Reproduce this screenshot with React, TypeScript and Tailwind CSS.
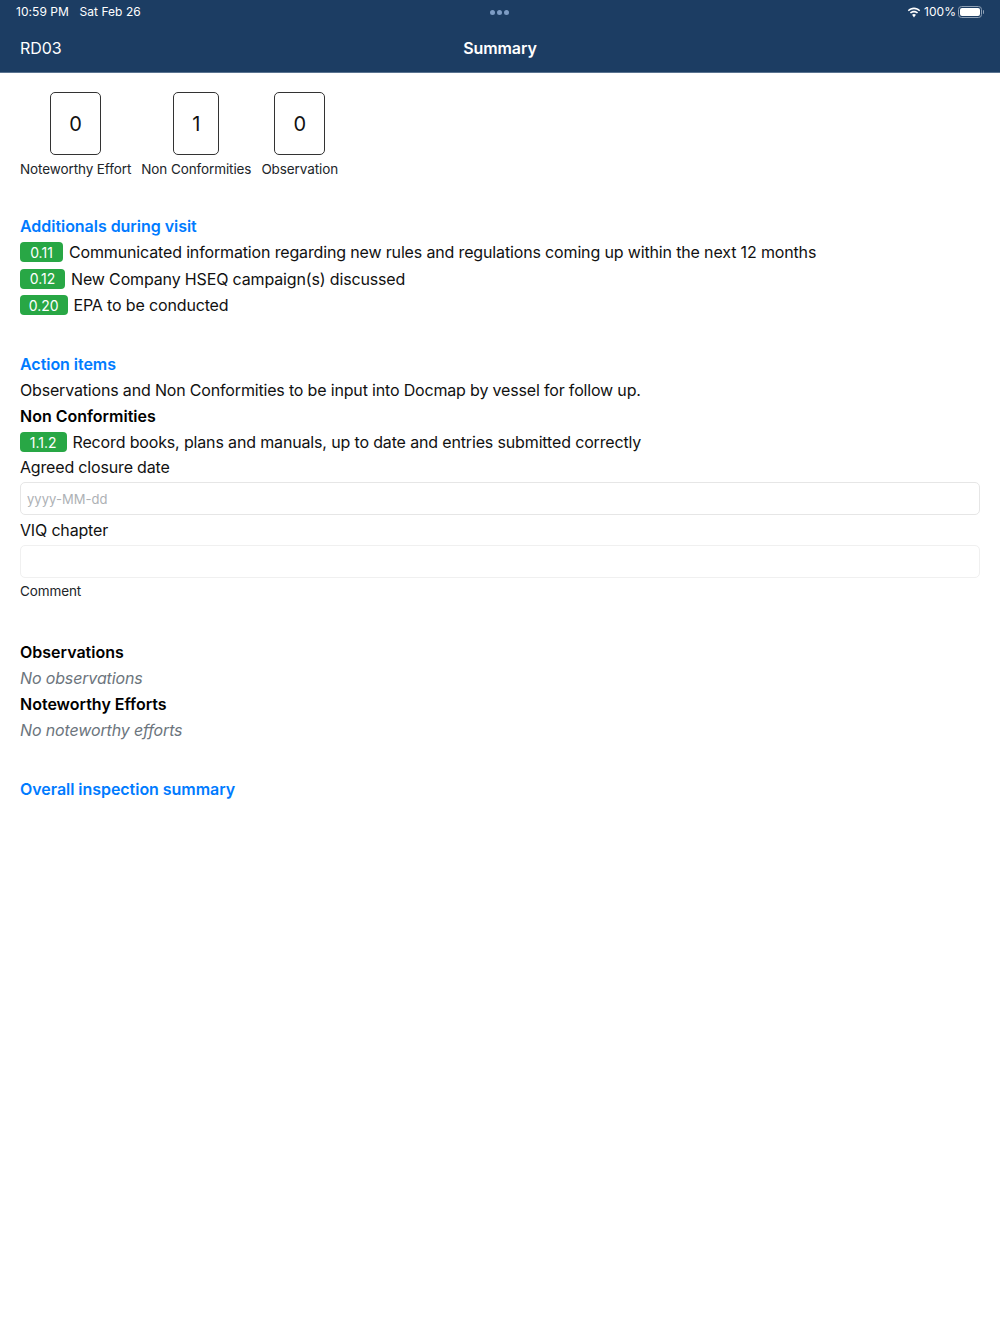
const font = "font-['Inter','Liberation_Sans',sans-serif]";

function Counter({ value, label }: { value: number; label: string }) {
  return (
    <div className="flex flex-col items-center">
      <div className="px-[18px] h-[63px] border border-[#333] rounded-[5px] flex items-center justify-center text-[20px] text-[#111]">
        {value}
      </div>
      <div className="mt-[4px] text-[13.5px] leading-[21px] text-[#212529] tracking-[-0.1px]">{label}</div>
    </div>
  );
}

function Tagged({ code, text, width }: { code: string; text: string; width: string }) {
  return (
    <div className="flex items-center h-[26.5px] text-[16px] text-[#111] tracking-[-0.15px]">
      <span className={`${width} bg-[#28a745] text-white text-[14px] rounded-[4px] h-[20px] flex items-center justify-center mr-[6px] tracking-normal font-normal`}>
        {code}
      </span>
      {text}
    </div>
  );
}

function Heading({ children }: { children: React.ReactNode }) {
  return <div className="text-[16px] leading-[26px] font-semibold text-[#007bff] tracking-[-0.04px]">{children}</div>;
}

function Sub({ children }: { children: React.ReactNode }) {
  return <div className="text-[16px] leading-[26px] font-semibold text-black">{children}</div>;
}

function Line({ children }: { children: React.ReactNode }) {
  return <div className="text-[16px] leading-[26px] text-[#111] tracking-[-0.17px]">{children}</div>;
}

function Muted({ children }: { children: React.ReactNode }) {
  return <div className="text-[16px] leading-[26px] italic text-[#6c757d] tracking-[-0.14px]">{children}</div>;
}

export default function App() {
  return (
    <div className={`${font} w-[1000px] h-[1334px] bg-white overflow-hidden`}>
      <header className="bg-[#1c3d63] h-[73px] border-b border-[#5a7390] text-white">
        <div className="relative flex items-center justify-between h-[24.5px] px-[16px] text-[12px] tracking-[0.05px]">
          <div className="flex gap-[10.5px]">
            <span>10:59 PM</span>
            <span>Sat Feb 26</span>
          </div>
          <div className="absolute left-[490px] top-[10px] flex gap-[2px]">
            <span className="w-[5px] h-[5px] rounded-full bg-[#7d9cc4]" />
            <span className="w-[5px] h-[5px] rounded-full bg-[#7d9cc4]" />
            <span className="w-[5px] h-[5px] rounded-full bg-[#7d9cc4]" />
          </div>
          <div className="flex items-center">
            <svg width="14" height="11" viewBox="0 0 14 11" fill="white" className="mr-[3px]">
              <path d="M7 2.2c2 0 3.8.8 5.2 2.1l1-1.1C11.5 1.6 9.4.6 7 .6S2.500 1.600.8 3.200l1 1.100C3.200 3 5 2.200 7 2.200z" />
              <path d="M7 5.400c1.100 0 2.200.4 3 1.200l1.100-1.100C10 4.400 8.600 3.800 7 3.800s-3 .6-4.100 1.700L4 6.600c.8-.8 1.900-1.200 3-1.200z" />
              <path d="M7 7c-.8 0-1.400.3-1.900.8L7 10.400l1.900-2.600C8.400 7.300 7.800 7 7 7z" />
            </svg>
            <span>100%</span>
            <div className="flex items-center gap-[1px] ml-[2px]">
              <div className="w-[24px] h-[12px] rounded-[3.500px] border border-[#8ea0b5] p-[1px]">
                <div className="w-full h-full bg-white rounded-[2px]" />
              </div>
              <div className="w-[1px] h-[4px] bg-[#8ea0b5] rounded-r-[1px]" />
            </div>
          </div>
        </div>
        <div className="relative flex items-center justify-center h-[47px]">
          <span className="absolute left-[20px] text-[16px] tracking-[-0.1px]">RD03</span>
          <span className="text-[16px] font-semibold tracking-[-0.1px]">Summary</span>
        </div>
      </header>

      <main className="px-[20px] pt-[19px]">
        <div className="flex gap-[10px]">
          <Counter value={0} label="Noteworthy Effort" />
          <Counter value={1} label="Non Conformities" />
          <Counter value={0} label="Observation" />
        </div>

        <section className="mt-[33px]">
          <Heading>Additionals during visit</Heading>
          <Tagged width="w-[43px]" code="0.11" text="Communicated information regarding new rules and regulations coming up within the next 12 months" />
          <Tagged width="w-[45px]" code="0.12" text="New Company HSEQ campaign(s) discussed" />
          <Tagged width="w-[47.5px]" code="0.20" text="EPA to be conducted" />
        </section>

        <section className="mt-[32.5px]">
          <Heading>Action items</Heading>
          <Line>Observations and Non Conformities to be input into Docmap by vessel for follow up.</Line>
          <Sub>Non Conformities</Sub>
          <Tagged width="w-[46.5px]" code="1.1.2" text="Record books, plans and manuals, up to date and entries submitted correctly" />
          <div className="-mt-[1.5px]">
            <Line>Agreed closure date</Line>
          </div>
          <input
            readOnly
            placeholder="yyyy-MM-dd"
            className="block w-full h-[33px] mt-[2px] px-[6px] rounded-[5px] border border-[#e6e6e6] text-[13px] tracking-[0.05px] placeholder:text-[#adb1b5] outline-none"
          />
          <div className="mt-[2px]">
            <Line>VIQ chapter</Line>
          </div>
          <div className="h-[33px] mt-[2px] rounded-[5px] border border-[#f0f0f0]" />
          <div className="mt-[3px] text-[13.5px] leading-[21px] text-[#212529] tracking-[-0.1px]">Comment</div>
        </section>

        <section className="mt-[37px]">
          <Sub>Observations</Sub>
          <Muted>No observations</Muted>
          <Sub>Noteworthy Efforts</Sub>
          <Muted>No noteworthy efforts</Muted>
        </section>

        <section className="mt-[33px]">
          <Heading>Overall inspection summary</Heading>
        </section>
      </main>
    </div>
  );
}
